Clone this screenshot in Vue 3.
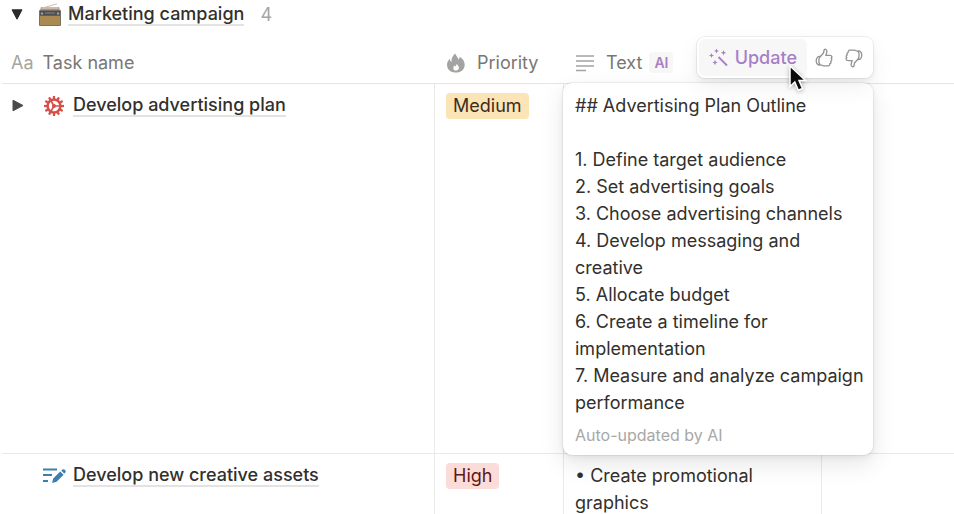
<template>
  <main class="board">
    <header class="group-header">
      <button class="toggle" type="button" aria-label="Collapse group">
        <svg width="12" height="11" viewBox="0 0 12 11"><path d="M1 .8h10L6 10.2z" fill="#2b2b2a" stroke="#2b2b2a" stroke-linejoin="round" /></svg>
      </button>
      <svg class="radio-icon" width="24" height="24" viewBox="0 0 24 24" aria-hidden="true">
        <path d="M3 5.500L19 .8" stroke="#c9beb4" stroke-width="1" />
        <path d="M3 4h18l1.500 5H1.500z" fill="#b98f70" />
        <path d="M3.500 5h17" stroke="#e3d2c3" stroke-width="1.200" />
        <rect x="1" y="7" width="22" height="16" rx="1" fill="#77716b" />
        <rect x="2" y="8" width="20" height="4.500" fill="#4b4d50" />
        <path d="M7 10h10" stroke="#85898d" stroke-width="1" />
        <circle cx="4" cy="10.500" r="1.200" fill="#9b9ea1" />
        <circle cx="20" cy="10.500" r="1.200" fill="#9b9ea1" />
        <rect x="2" y="13" width="20" height="9" fill="#aa8a50" />
      </svg>
      <a class="link" href="#">Marketing campaign</a>
      <span class="count">4</span>
    </header>

    <table class="tasks">
      <colgroup>
        <col class="col-name" />
        <col class="col-priority" />
        <col class="col-text" />
        <col />
      </colgroup>
      <thead>
        <tr>
          <th scope="col">
            <div class="heading title"><span class="aa">Aa</span>Task name</div>
          </th>
          <th scope="col">
            <div class="heading">
              <svg width="20" height="20" viewBox="0 0 20 20" aria-hidden="true">
                <path
                  d="M9.300.5c.5 2.400 2.700 3.600 3.200 6.100.7-.6 1-1.600 1-2.900 3.200 1.900 5.200 4.300 5.200 8 0 4.700-3.700 7.800-8.700 7.800S1 16.400 1 11.900c0-2.700 1.300-4.700 2.800-6.200.2 1.500.6 2.500 1.700 3.300C5.300 5.600 6.500 2.500 9.300.5zM10.600 11c-.2 1.300-.6 1.700-1.300 2.500-.4-.4-.6-.7-.7-1.300-.8.9-1.300 1.700-1.300 2.700 0 1.700 1.100 2.700 2.700 2.700 1.700 0 2.900-1 2.900-2.800 0-1.700-1.100-2.600-2.300-3.800z"
                  fill="#a3a3a2"
                  fill-rule="evenodd"
                />
              </svg>
              Priority
            </div>
          </th>
          <th scope="col">
            <div class="heading">
              <svg width="20" height="18" viewBox="0 0 20 18" aria-hidden="true">
                <path d="M1 2h18M1 7h18M1 12h18M1 16.500h10" stroke="#a3a3a2" stroke-width="1.500" />
              </svg>
              Text
              <span class="ai-badge">AI</span>
            </div>
          </th>
          <th></th>
        </tr>
      </thead>
      <tbody>
        <tr v-for="task in tasks" :key="task.name">
          <td>
            <div class="name">
              <span class="toggle-slot">
                <button v-if="task.expandable" class="toggle" type="button" aria-label="Expand task">
                  <svg width="12" height="13" viewBox="0 0 12 13"><path d="M1 1.200v10.600L11 6.500z" fill="#4a4a49" stroke="#4a4a49" stroke-linejoin="round" /></svg>
                </button>
              </span>
              <svg v-if="task.icon === 'gear'" class="task-icon" width="24" height="24" viewBox="0 0 24 24" aria-hidden="true">
                <g stroke="#d6504a">
                  <path v-for="n in 12" :key="n" d="M12 2v3.500" stroke-width="2.200" :transform="`rotate(${n * 30} 12 12)`" />
                  <circle cx="12" cy="12" r="6.400" fill="none" stroke-width="2.500" />
                  <path d="M12 12h6M12 12l-3.200-5.500M12 12l-3.200 5.500" stroke-width="1.600" />
                </g>
                <circle cx="12" cy="12" r="2" fill="#d6504a" />
              </svg>
              <svg v-else class="task-icon" width="24" height="24" viewBox="0 0 24 24" aria-hidden="true">
                <path d="M1 5.500h14M1 11h9M1 17h5" stroke="#3c80ae" stroke-width="2" />
                <path d="M10 19l1.200-4.600 7-7 3.400 3.400-7 7zM19.300 6.800l1.200-1.200c1.600-1.300 4.200 1.200 2.900 2.800l-1.200 1.200z" fill="#3c80ae" />
              </svg>
              <a class="link" href="#">{{ task.name }}</a>
            </div>
          </td>
          <td>
            <span class="tag" :class="task.priority.toLowerCase()">{{ task.priority }}</span>
          </td>
          <td :class="{ active: task.outline }">
            <div v-if="task.outline" class="editor">
              <div class="actions">
                <button class="update" type="button">
                  <svg width="20" height="20" viewBox="0 0 20 20" aria-hidden="true">
                    <path d="M9.500 9l8.500 8.500" stroke="#a77fc6" stroke-width="1.800" />
                    <path
                      d="M7.500.5l.7 1.800 1.800.7-1.800.7-.7 1.800-.7-1.800L5 3l1.800-.7zM2.500 5l.7 1.800 1.800.7-1.800.7-.7 1.800-.7-1.800L0 7.500l1.800-.7zM14.500 2l.8 1.900 1.900.8-1.900.8-.8 1.900-.8-1.900-1.900-.8 1.900-.8zM6 11.800l.8 1.900 1.900.8-1.900.8-.8 1.900-.8-1.900-1.900-.8 1.900-.8z"
                      fill="#a77fc6"
                    />
                  </svg>
                  Update
                </button>
                <div class="votes">
                  <button type="button" aria-label="Good response">
                    <svg width="18" height="20" viewBox="0 0 18 20"><path :d="thumb" /></svg>
                  </button>
                  <button type="button" aria-label="Bad response">
                    <svg class="down" width="18" height="20" viewBox="0 0 18 20"><path :d="thumb" /></svg>
                  </button>
                </div>
                <svg class="cursor" width="20" height="30" viewBox="0 0 20 30" aria-hidden="true">
                  <path d="M2 2v20.500l4.800-4.500 3.500 8.300 4.200-1.800-3.500-8.100H17.500z" fill="#0b0b0b" stroke="#fff" stroke-width="1.500" />
                </svg>
              </div>
              <p class="text">{{ task.text }}</p>
              <small>Auto-updated by AI</small>
            </div>
            <p v-else class="text">{{ task.text }}</p>
          </td>
          <td></td>
        </tr>
      </tbody>
    </table>
  </main>
</template>

<script setup>
import { ref } from 'vue'

const thumb =
  'M5 9l3.500-4 .6-3c.3-1.400 2.800-1 2.800 1.300 0 1.500-.5 2.700-1.100 4H15c2.100 0 2.500 2.400 1.100 3 1.200.9.800 2.500-.4 2.800.8 1 .2 2.300-.9 2.500.3 1.300-.5 2.200-1.800 2.200H9c-1.800 0-2.700-.9-4-1.300M5 8.500c-2-.4-3.800 1.400-3.800 4.200s1.700 4.700 3.800 4.300c-1.500-2.700-1.400-5.800 0-8.500z'

const tasks = ref([
  {
    name: 'Develop advertising plan',
    icon: 'gear',
    expandable: true,
    priority: 'Medium',
    outline: true,
    text: [
      '## Advertising Plan Outline',
      '',
      '1. Define target audience',
      '2. Set advertising goals',
      '3. Choose advertising channels',
      '4. Develop messaging and creative',
      '5. Allocate budget',
      '6. Create a timeline for implementation',
      '7. Measure and analyze campaign performance'
    ].join('\n')
  },
  {
    name: 'Develop new creative assets',
    icon: 'edit',
    expandable: false,
    priority: 'High',
    outline: false,
    text: '• Create promotional graphics'
  }
])
</script>

<style>
body {
  margin: 0;
  background: #fff;
}
</style>

<style scoped>
.board {
  height: 100vh;
  overflow: hidden;
  padding-left: 2px;
  box-sizing: border-box;
  font-family: Inter, 'Liberation Sans', sans-serif;
  font-size: 18px;
  line-height: 27px;
  color: #32302c;
}

button {
  display: flex;
  align-items: center;
  padding: 0;
  border: none;
  background: none;
  font: inherit;
  cursor: pointer;
}

svg {
  display: block;
  flex: none;
}

.group-header {
  display: flex;
  align-items: center;
  height: 29px;
  padding-left: 9px;
}

.radio-icon {
  margin: 0 6px 0 15px;
}

.link {
  font-weight: 500;
  line-height: 20px;
  color: #32302c;
  text-decoration: none;
  border-bottom: 2px solid #e3e3e2;
}

.count {
  margin-left: 16px;
  color: #a5a5a4;
}

.tasks {
  width: 100%;
  margin-top: 13px;
  table-layout: fixed;
  border-collapse: separate;
  border-spacing: 0;
}

.col-name {
  width: 433px;
}

.col-priority {
  width: 129px;
}

.col-text {
  width: 258px;
}

th {
  height: 41px;
  padding: 0 11px;
  border-bottom: 1px solid #e6e6e5;
  font-weight: 400;
  text-align: left;
  color: #787774;
}

th:first-child {
  padding-left: 9px;
}

.heading {
  display: flex;
  align-items: center;
  gap: 11px;
}

.title {
  gap: 9px;
}

.aa {
  color: #a5a5a4;
}

.ai-badge {
  margin-left: -4px;
  padding: 0 5px;
  border-radius: 4px;
  background: #f8f7f8;
  font-size: 14px;
  font-weight: 600;
  line-height: 21px;
  color: #a77fc6;
}

td {
  padding: 8px 11px;
  border-right: 1px solid #e9e9e8;
  border-bottom: 1px solid #e9e9e8;
  vertical-align: top;
}

td:first-child {
  padding-left: 10px;
}

td:last-child {
  border-right: none;
}

td.active {
  padding: 0;
}

.name {
  display: flex;
  align-items: center;
  height: 27px;
}

.toggle-slot {
  width: 30px;
}

.task-icon {
  margin-right: 7px;
}

.tag {
  display: inline-block;
  padding: 0 7px;
  border-radius: 4px;
  line-height: 26px;
}

.medium {
  background: #fbe4b6;
  color: #402c1b;
}

.high {
  background: #fcdcd8;
  color: #5d1715;
}

.text {
  margin: 0;
  white-space: pre-line;
}

.editor {
  position: relative;
  width: 310px;
  margin: -1px 0 -2px -1px;
  padding: 9px 6px 9px 12px;
  box-sizing: border-box;
  border-radius: 9px;
  background: #fff;
  box-shadow:
    0 0 0 1px rgba(15, 15, 15, 0.06),
    0 3px 6px rgba(15, 15, 15, 0.06),
    0 9px 24px rgba(15, 15, 15, 0.1);
}

small {
  display: block;
  margin-top: 8px;
  font-size: 16px;
  line-height: 22px;
  color: #a8a8a7;
}

.actions {
  position: absolute;
  right: 0;
  bottom: calc(100% + 5px);
  display: flex;
  align-items: center;
  gap: 8px;
  padding: 2px 10px 2px 2px;
  border-radius: 8px;
  background: #fff;
  box-shadow:
    0 0 0 1px rgba(15, 15, 15, 0.06),
    0 3px 6px rgba(15, 15, 15, 0.06),
    0 9px 24px rgba(15, 15, 15, 0.06);
}

.update {
  gap: 6px;
  height: 37px;
  padding: 0 10px;
  border-radius: 6px;
  background: #f7f7f7;
  font-weight: 500;
  color: #a77fc6;
}

.votes {
  display: flex;
  gap: 12px;
}

.votes path {
  fill: none;
  stroke: #929291;
  stroke-width: 1.3;
  stroke-linejoin: round;
}

.down {
  transform: rotate(180deg);
}

.cursor {
  position: absolute;
  top: 27px;
  left: 91px;
  filter: drop-shadow(0 1px 2px rgba(0, 0, 0, 0.3));
}
</style>
